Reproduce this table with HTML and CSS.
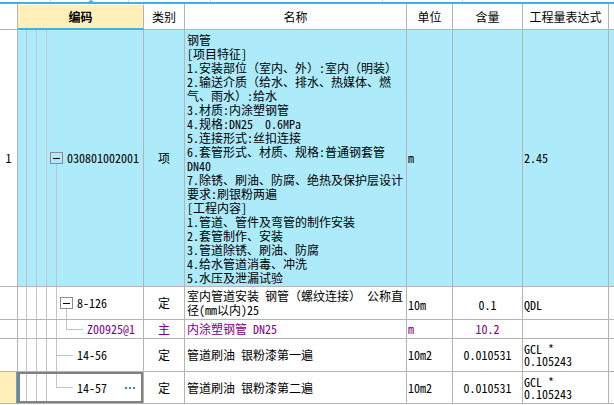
FILE: index.html
```html
<!DOCTYPE html>
<html lang="zh">
<head>
<meta charset="utf-8">
<title>清单</title>
<link rel="stylesheet" href="styles.css">
</head>
<body>
<div class="topbar"><span class="tri"></span></div>
<div class="grid">
  <!-- header -->
  <div class="cell hd"></div>
  <div class="cell hd hd-code ctr">编码</div>
  <div class="cell hd ctr">类别</div>
  <div class="cell hd ctr">名称</div>
  <div class="cell hd ctr">单位</div>
  <div class="cell hd ctr">含量</div>
  <div class="cell hd ctr">工程量表达式</div>
  <div class="cell hd end"></div>

  <!-- row 1 -->
  <div class="cell ctr">1</div>
  <div class="cell code blue t1"><div class="tree lv1"><span class="tog"></span><span>030801002001</span></div></div>
  <div class="cell blue ctr">项</div>
  <div class="cell blue desc">
    <div>钢管</div>
    <div>[项目特征]</div>
    <div>1.安装部位<span class="fw">（</span>室内、外<span class="fw">）</span>:室内<span class="fw">（</span>明装<span class="fw">）</span></div>
    <div>2.输送介质<span class="fw">（</span>给水、排水、热媒体、燃</div>
    <div>气、雨水<span class="fw">）</span>:给水</div>
    <div>3.材质:内涂塑钢管</div>
    <div>4.规格:DN25  0.6MPa</div>
    <div>5.连接形式:丝扣连接</div>
    <div>6.套管形式、材质、规格:普通钢套管</div>
    <div>DN40</div>
    <div>7.除锈、刷油、防腐、绝热及保护层设计</div>
    <div>要求:刷银粉两遍</div>
    <div>[工程内容]</div>
    <div>1.管道、管件及弯管的制作安装</div>
    <div>2.套管制作、安装</div>
    <div>3.管道除锈、刷油、防腐</div>
    <div>4.给水管道消毒、冲洗</div>
    <div>5.水压及泄漏试验</div>
  </div>
  <div class="cell blue pl">m</div>
  <div class="cell blue ctr"></div>
  <div class="cell blue pl">2.45</div>
  <div class="cell blue end"></div>

  <!-- row 2 -->
  <div class="cell"></div>
  <div class="cell code t2"><div class="tree lv2"><span class="tog"></span><span>8-126</span></div></div>
  <div class="cell ctr">定</div>
  <div class="cell name2"><div>室内管道安装 钢管<span class="fw">（</span>螺纹连接<span class="fw">）</span> 公称直<br>径(mm以内)25</div></div>
  <div class="cell pl low">10m</div>
  <div class="cell ctr low">0.1</div>
  <div class="cell pl low">QDL</div>
  <div class="cell end"></div>

  <!-- row 3 -->
  <div class="cell"></div>
  <div class="cell code t3 purple"><div class="tree lv3"><span>Z00925@1</span></div></div>
  <div class="cell ctr purple">主</div>
  <div class="cell name purple">内涂塑钢管 DN25</div>
  <div class="cell pl purple">m</div>
  <div class="cell ctr purple">10.2</div>
  <div class="cell pl"></div>
  <div class="cell end"></div>

  <!-- row 4 -->
  <div class="cell"></div>
  <div class="cell code t4"><div class="tree lv2"><span>14-56</span></div></div>
  <div class="cell ctr">定</div>
  <div class="cell name">管道刷油 银粉漆第一遍</div>
  <div class="cell pl">10m2</div>
  <div class="cell ctr">0.010531</div>
  <div class="cell pl expr"><div>GCL *<br>0.105243</div></div>
  <div class="cell end"></div>

  <!-- row 5 -->
  <div class="cell cur"></div>
  <div class="cell code t5 sel"><div class="tree lv2"><span>14-57</span><span class="more"><i></i><i></i><i></i></span></div></div>
  <div class="cell ctr">定</div>
  <div class="cell name">管道刷油 银粉漆第二遍</div>
  <div class="cell pl">10m2</div>
  <div class="cell ctr">0.010531</div>
  <div class="cell pl expr"><div>GCL *<br>0.105243</div></div>
  <div class="cell end"></div>
</div>
</body>
</html>
```
FILE: styles.css
```css
* { box-sizing: border-box; }

body {
  margin: 0;
  background: #fff;
  color: #000;
  font-family: "Noto Sans CJK SC", "Noto Sans", sans-serif;
  font-size: 12px;
  font-feature-settings: "hwid" 1;
}

.fw { font-feature-settings: normal; }

.topbar {
  height: 4px;
  border-bottom: 2px solid #41b1e1;
  display: flex;
  align-items: flex-end;
  background-image:
    linear-gradient(#d4d4d4, #d4d4d4),
    linear-gradient(#d4d4d4, #d4d4d4),
    linear-gradient(#d4d4d4, #d4d4d4),
    linear-gradient(#d4d4d4, #d4d4d4),
    linear-gradient(#d4d4d4, #d4d4d4);
  background-repeat: no-repeat;
  background-size: 1px 2px;
  background-position: 50px 0, 128px 0, 210px 0, 382px 0, 462px 0;
}

.tri {
  margin-left: 88px;
  width: 0;
  height: 0;
  border-left: 3px solid transparent;
  border-right: 3px solid transparent;
  border-bottom: 2px solid #41b1e1;
}

.grid {
  display: grid;
  grid-template-columns: 18px 126px 41px 222px 46px 70px 86px 1fr;
  grid-template-rows: 26px 257px 33px 19px 33px 32px;
}

.cell {
  border-right: 1px solid #b4b4b4;
  border-bottom: 1px solid #b4b4b4;
  display: flex;
  align-items: center;
  overflow: hidden;
  white-space: nowrap;
  line-height: 14px;
}

.end { border-right: 0; }
.ctr { justify-content: center; }
.pl { padding-left: 1px; }
.low { padding-top: 3px; }

.hd { background: #fff; }
.hd-code {
  background: #ffefb9;
  border-top: 1px solid #fff;
  border-bottom: 2px solid #41b1e1;
  font-weight: bold;
}

.blue { background-color: #adeafa; }
.purple { color: #800080; }

.desc {
  display: block;
  padding: 3px 0 1px 2px;
}
.desc div { white-space: pre; }

.name { padding-left: 2px; }
.name2 { padding-left: 2px; align-items: flex-start; padding-top: 2px; }

.expr div { line-height: 12px; }

.cur {
  background: #ffefb9;
  border-right-color: #808080;
  box-shadow: inset -1px 0 0 #41b1e1;
}

/* tree column */
.code {
  padding: 0;
  background-repeat: no-repeat;
}
.t1, .t2, .t3, .t4, .t5 {
  background-image:
    linear-gradient(#c4c4c4, #c4c4c4),
    linear-gradient(#c4c4c4, #c4c4c4),
    linear-gradient(#c4c4c4, #c4c4c4),
    linear-gradient(#c4c4c4, #c4c4c4),
    linear-gradient(#c4c4c4, #c4c4c4),
    linear-gradient(#c4c4c4, #c4c4c4);
}
.t1 {
  background-position: 8px 0, 18px 0, 28px 0, 38px 100%, 0 0, 0 0;
  background-size: 1px 100%, 1px 100%, 1px 100%, 1px 50%, 0 0, 0 0;
}
.t2 {
  background-position: 8px 0, 18px 0, 28px 0, 38px 0, 48px 100%, 0 0;
  background-size: 1px 100%, 1px 100%, 1px 100%, 1px 100%, 1px 50%, 0 0;
}
.t3 {
  background-position: 8px 0, 18px 0, 28px 0, 38px 0, 48px 0, 48px 50%;
  background-size: 1px 100%, 1px 100%, 1px 100%, 1px 100%, 1px 50%, 17px 1px;
}
.t4 {
  background-position: 8px 0, 18px 0, 28px 0, 38px 0, 38px 50%, 0 0;
  background-size: 1px 100%, 1px 100%, 1px 100%, 1px 100%, 17px 1px, 0 0;
}
.t5 {
  background-position: 8px 0, 18px 0, 28px 0, 38px 0, 38px 50%, 0 0;
  background-size: 1px 100%, 1px 100%, 1px 100%, 1px 50%, 17px 1px, 0 0;
}

.sel { box-shadow: inset 0 0 0 2px #808080; }

.tree {
  display: flex;
  align-items: center;
  width: 100%;
}
.lv1 { padding-left: 32px; }
.lv2 { padding-left: 42px; }
.t4 .lv2, .t5 .lv2 { padding-left: 59px; }
.lv3 { padding-left: 69px; }

.tog {
  width: 13px;
  height: 12px;
  border: 1px solid #8c8c8c;
  display: flex;
  align-items: center;
  justify-content: center;
  margin-right: 4px;
  background: #fff;
}
.t1 .tog { background: #adeafa; }
.tog::before {
  content: "";
  width: 7px;
  height: 1px;
  background: #000;
}

.more {
  margin-left: auto;
  margin-right: 8px;
  display: flex;
  gap: 2px;
  padding-top: 1px;
}
.more i {
  display: block;
  width: 2px;
  height: 2px;
  background: #2f86cf;
}
```
